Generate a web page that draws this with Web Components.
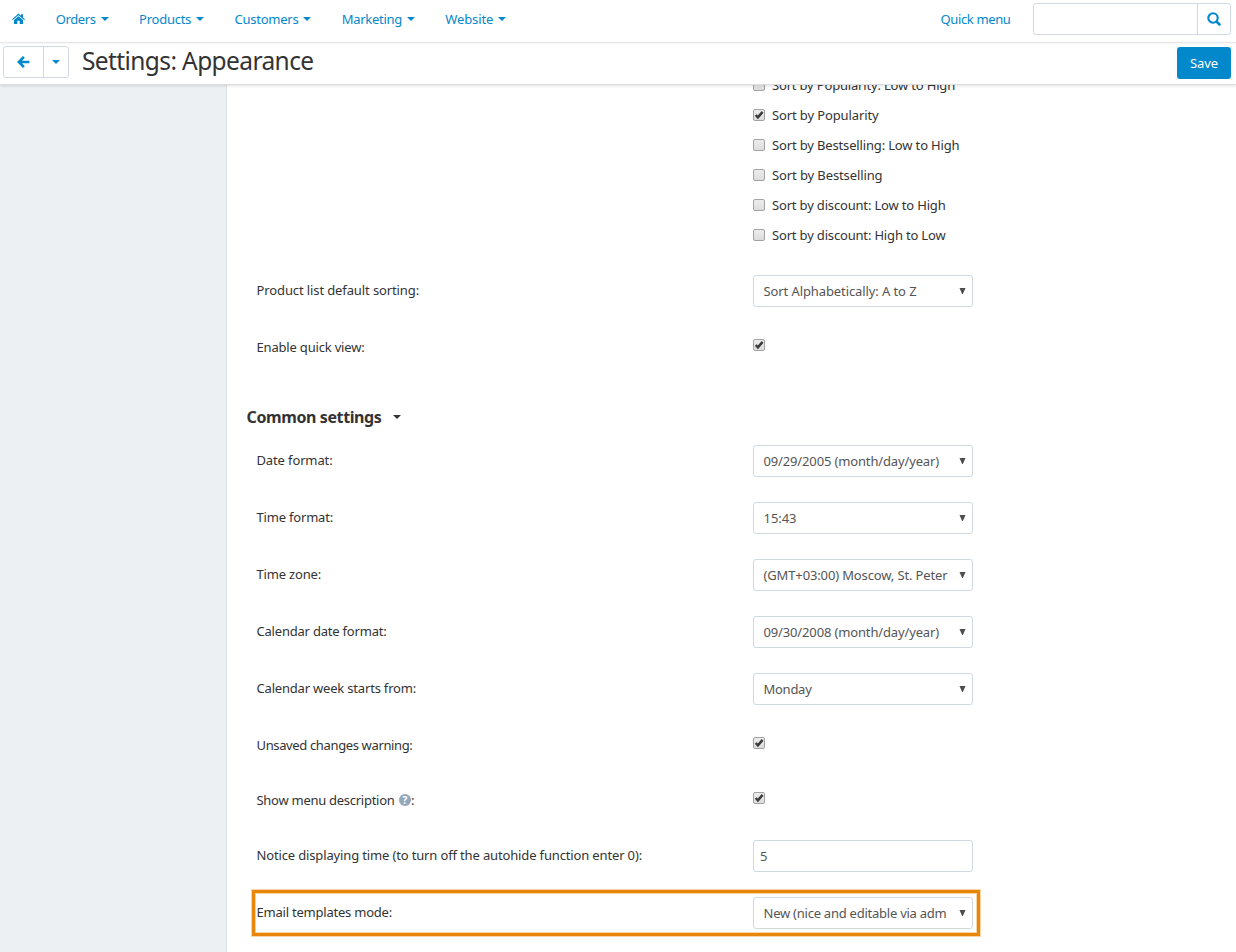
<!DOCTYPE html>
<html lang="en">
<head>
<meta charset="utf-8">
<title>Settings: Appearance</title>
<style>
html,body{margin:0;height:100%;overflow:hidden;background:#fff}
body{font:13px/20px "Noto Sans","Open Sans",sans-serif;color:#333}
</style>
</head>
<body>
<settings-app></settings-app>
<script>
const define = (name, html, setup) => customElements.define(name, class extends HTMLElement {
  connectedCallback() {
    if (this.shadowRoot) return;
    const t = document.createElement('template');
    t.innerHTML = html;
    this.attachShadow({mode: 'open'}).append(t.content.cloneNode(true));
    if (setup) setup(this, this.shadowRoot);
  }
});

// Text set to a given measure by adjusting its tracking.
define('fit-text', `<style>:host{display:inline-block;white-space:nowrap}span{display:inline-block;white-space:pre}</style><span><slot></slot></span>`,
  (el, root) => {
    const w = +el.getAttribute('w'), s = root.querySelector('span');
    const n = el.textContent.length;
    s.style.letterSpacing = ((w - s.getBoundingClientRect().width) / n) + 'px';
    el.style.width = w + 'px';
  });

define('caret-down', `<style>:host{display:block;width:0;height:0;border:4px solid transparent;border-top-color:currentColor;border-bottom:0}</style>`);

define('nav-item', `<style>
:host{display:flex;align-items:center;gap:5px;color:#0388cc}
</style><slot></slot><caret-down></caret-down>`);

define('search-box', `<style>
:host{display:flex;box-sizing:border-box;width:198px;height:32px;border:1px solid #d0d9e1;border-radius:3px;background:#fff}
i{flex:1}
b{width:32px;border-left:1px solid #d0d9e1;display:flex;align-items:center;justify-content:center}
svg{display:block}
</style><i></i><b><svg width="14" height="14" viewBox="0 0 14 14" fill="none" stroke="#0388cc"><circle cx="6" cy="6" r="4.7" stroke-width="2.1"/><path d="M9.5 9.5L12.5 12.5" stroke-width="2.5" stroke-linecap="round"/></svg></b>`);

define('nav-bar', `<style>
:host{display:flex;box-sizing:border-box;height:43px;padding:0 5px 4px 12px;align-items:center;border-bottom:1px solid #ebebeb;background:#fff;color:#0388cc;flex:none}
nav{display:flex;gap:30.4px;margin-left:30.7px}
svg{display:block}
.quick{margin-left:auto;margin-right:22.5px}
search-box{margin-top:-1px}
</style>
<svg width="13" height="12" viewBox="0 0 13 12" fill="#0388cc"><path d="M6.5 0.5L9 2.7V1.2h2v3.2L13 6.2l-.8.9L6.5 2.2.8 7.1 0 6.2z"/><path d="M6.5 3.2L11 7v3.7q0 .4-.4.4H7.7V7.8H5.3v3.3H2.4q-.4 0-.4-.4V7z"/></svg>
<nav>
<nav-item><fit-text w="40">Orders</fit-text></nav-item>
<nav-item><fit-text w="52">Products</fit-text></nav-item>
<nav-item><fit-text w="64">Customers</fit-text></nav-item>
<nav-item><fit-text w="60">Marketing</fit-text></nav-item>
<nav-item><fit-text w="48">Website</fit-text></nav-item>
</nav>
<fit-text class="quick" w="70">Quick menu</fit-text>
<search-box></search-box>`);

define('back-button', `<style>
:host{display:flex;box-sizing:border-box;width:66px;height:32px;border:1px solid #d0d9e1;border-radius:3px;color:#0388cc}
span{display:flex;align-items:center;justify-content:center}
.a{width:39px;border-right:1px solid #d0d9e1}.b{flex:1}
</style><span class="a"><svg width="13" height="12" viewBox="0 0 13 12" fill="none" stroke="currentColor" stroke-width="2.6"><path d="M6.9 .9L1.9 6l5 5.1M2.2 6H12.4"/></svg></span><span class="b"><caret-down></caret-down></span>`);

define('title-bar', `<style>
:host{display:flex;box-sizing:border-box;height:42px;padding:3px 5px 0 3px;align-items:flex-start;background:#fff;border-bottom:1px solid #dedede;box-shadow:0 1px 3px rgba(0,0,0,.13);position:relative;z-index:1;flex:none}
:host::before{content:"";position:absolute;left:0;right:0;top:0;height:2px;background:linear-gradient(#f6f6f6,#fff)}
h1{margin:-2px 0 0 13px;font-size:24.5px;line-height:34px;font-weight:400;color:#333}
button{margin:1px 0 0 auto;width:54px;height:32px;padding:0;border:0;border-radius:3px;background:#0388cc;color:#fff;font:inherit}
</style>
<back-button></back-button>
<h1><fit-text w="231.5">Settings: Appearance</fit-text></h1>
<button><fit-text w="28">Save</fit-text></button>`);

define('check-box', `<style>
:host{display:block;width:12px;height:12px;flex:none}svg{display:block}
</style><svg width="12" height="12" viewBox="0 0 12 12"><defs><linearGradient id="g" x2="0" y2="1"><stop stop-color="#ededed"/><stop offset="1" stop-color="#dcdcdc"/></linearGradient></defs><rect x=".5" y=".5" width="11" height="11" rx="1.5" fill="url(#g)" stroke="#a3a3a3"/><path class="m" d="M2.7 6L4.9 8.3 9.6 2.9" fill="none" stroke="#3b3b3b" stroke-width="2.5"/></svg>`,
  (el, root) => { if (!el.hasAttribute('checked')) root.querySelector('.m').remove(); });

define('check-row', `<style>
:host{display:flex;height:30px;align-items:center;gap:7px}
</style><check-box></check-box><slot></slot>`,
  (el, root) => { if (el.hasAttribute('checked')) root.querySelector('check-box').replaceWith(Object.assign(document.createElement('template'), {innerHTML: '<check-box checked></check-box>'}).content); });

define('select-box', `<style>
:host{display:flex;box-sizing:border-box;width:220px;height:32px;border:1px solid #d0d9e1;border-radius:3px;background:#fff;color:#555;align-items:center;justify-content:space-between;padding:0 6px 0 9.5px}
svg{display:block;margin-top:-1px}
</style><slot></slot><svg width="7" height="6" viewBox="0 0 7 6"><path d="M.5 0H6.5L3.9 6H3.1z" fill="#4d4d4d"/></svg>`);

define('text-field', `<style>
:host{display:flex;box-sizing:border-box;width:220px;height:32px;border:1px solid #d0d9e1;border-radius:3px;background:#fff;color:#555;align-items:center;padding:0 6px}
</style><slot></slot>`);

define('help-mark', `<style>
:host{display:inline-flex;width:12px;height:12px;border-radius:50%;background:#93a7b8;color:#fff;font-weight:700;font-size:10px;line-height:12px;align-items:center;justify-content:center;margin:0 0 0 4.5px}
</style>?`);

define('form-row', `<style>
:host{display:grid;grid-template-columns:496.5px 220px;min-height:30px;margin-bottom:25px;padding-left:29.5px;align-items:start;position:relative}
:host([mark])::after{content:"";position:absolute;left:25px;top:-7px;width:722px;height:40px;border:3px solid #e8850b;box-shadow:0 0 0 1px #f9d5a6,inset 0 0 0 1px #f9d5a6}
:host([mark]) ::slotted(*){z-index:1}
.l{padding-top:5px;height:20px;display:flex;align-items:center}
::slotted(check-box){margin-top:7px}
</style><div class="l"><slot name="label"></slot></div><slot></slot>`);

define('section-title', `<style>
:host{display:flex;box-sizing:border-box;height:58px;padding:2px 0 0 19.5px;align-items:center;gap:11.5px;font-size:16px;font-weight:700;line-height:24px;color:#333}
caret-down{border-width:4.5px 4.5px 0}
</style><slot></slot><caret-down></caret-down>`);

define('settings-form', `<style>
:host{display:block;flex:1;min-width:0;overflow:hidden;border-left:1px solid #dfe4e8}
.list{margin:-15px 0 25px 526px}
</style>
<div class="list">
<check-row><fit-text w="183">Sort by Popularity: Low to High</fit-text></check-row>
<check-row checked><fit-text w="106.5">Sort by Popularity</fit-text></check-row>
<check-row><fit-text w="187.5">Sort by Bestselling: Low to High</fit-text></check-row>
<check-row><fit-text w="110.5">Sort by Bestselling</fit-text></check-row>
<check-row><fit-text w="173.5">Sort by discount: Low to High</fit-text></check-row>
<check-row><fit-text w="173.5">Sort by discount: High to Low</fit-text></check-row>
</div>
<form-row><fit-text slot="label" w="162.5">Product list default sorting:</fit-text><select-box><fit-text w="153">Sort Alphabetically: A to Z</fit-text></select-box></form-row>
<form-row><fit-text slot="label" w="108">Enable quick view:</fit-text><check-box checked></check-box></form-row>
<section-title><fit-text w="135">Common settings</fit-text></section-title>
<form-row><fit-text slot="label" w="76">Date format:</fit-text><select-box><fit-text w="175.5">09/29/2005 (month/day/year)</fit-text></select-box></form-row>
<form-row><fit-text slot="label" w="76.5">Time format:</fit-text><select-box><fit-text w="33">15:43</fit-text></select-box></form-row>
<form-row><fit-text slot="label" w="64.5">Time zone:</fit-text><select-box><fit-text w="184">(GMT+03:00) Moscow, St. Peter</fit-text></select-box></form-row>
<form-row><fit-text slot="label" w="130">Calendar date format:</fit-text><select-box><fit-text w="175.5">09/30/2008 (month/day/year)</fit-text></select-box></form-row>
<form-row><fit-text slot="label" w="159.5">Calendar week starts from:</fit-text><select-box><fit-text w="48">Monday</fit-text></select-box></form-row>
<form-row><fit-text slot="label" w="156">Unsaved changes warning:</fit-text><check-box checked></check-box></form-row>
<form-row><fit-text slot="label" w="138">Show menu description</fit-text><help-mark slot="label"></help-mark><span slot="label">:</span><check-box checked></check-box></form-row>
<form-row><fit-text slot="label" w="385.5">Notice displaying time (to turn off the autohide function enter 0):</fit-text><text-field>5</text-field></form-row>
<form-row mark><fit-text slot="label" w="135.5">Email templates mode:</fit-text><select-box><fit-text w="183">New (nice and editable via adm</fit-text></select-box></form-row>`);

define('settings-app', `<style>
:host{display:flex;flex-direction:column;height:952px;overflow:hidden}
main{display:flex;flex:1;min-height:0}
aside{width:226px;background:#ecf0f3;flex:none}
</style><nav-bar></nav-bar><title-bar></title-bar><main><aside></aside><settings-form></settings-form></main>`);
</script>
</body>
</html>
